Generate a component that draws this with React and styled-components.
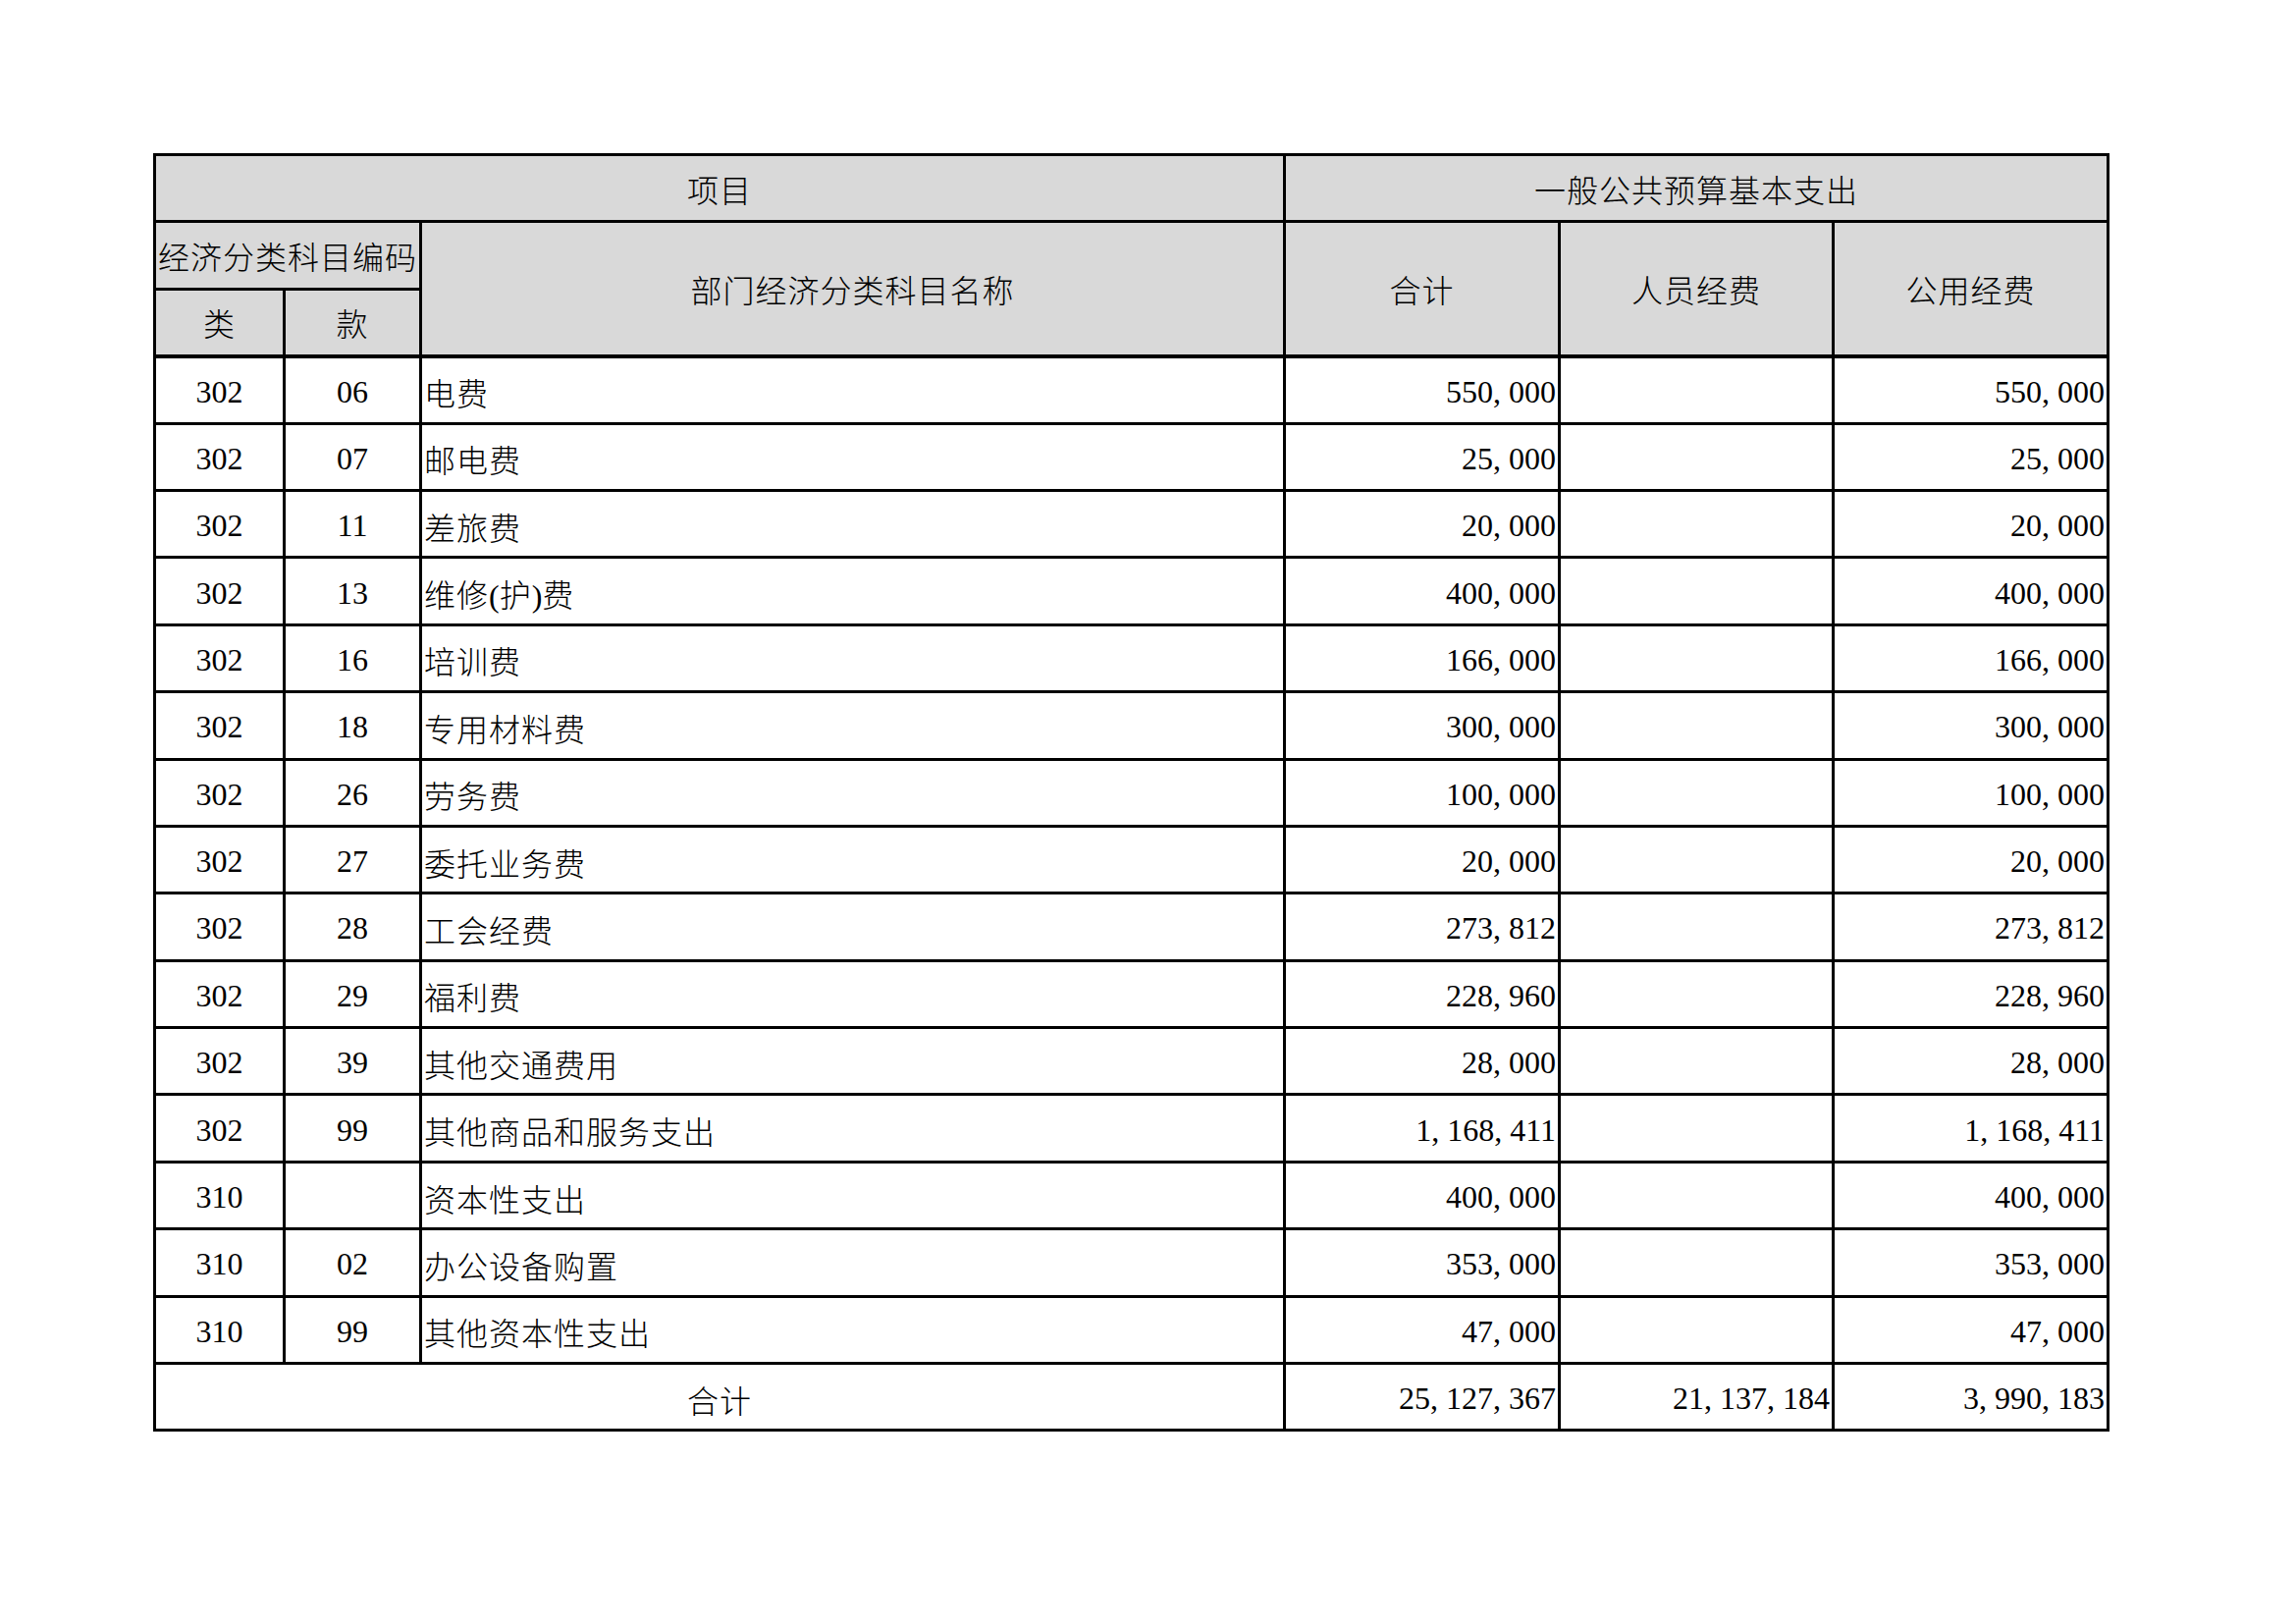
import React from 'react'
import styled, { createGlobalStyle } from 'styled-components'

const GlobalStyle = createGlobalStyle`
  html, body {
    margin: 0;
    padding: 0;
    background: #ffffff;
  }
  body {
    font-family: "Liberation Serif", "Noto Sans CJK SC", serif;
    color: #000;
  }
`

const rows = [
  ['302', '06', '电费', '550,000', '', '550,000'],
  ['302', '07', '邮电费', '25,000', '', '25,000'],
  ['302', '11', '差旅费', '20,000', '', '20,000'],
  ['302', '13', '维修(护)费', '400,000', '', '400,000'],
  ['302', '16', '培训费', '166,000', '', '166,000'],
  ['302', '18', '专用材料费', '300,000', '', '300,000'],
  ['302', '26', '劳务费', '100,000', '', '100,000'],
  ['302', '27', '委托业务费', '20,000', '', '20,000'],
  ['302', '28', '工会经费', '273,812', '', '273,812'],
  ['302', '29', '福利费', '228,960', '', '228,960'],
  ['302', '39', '其他交通费用', '28,000', '', '28,000'],
  ['302', '99', '其他商品和服务支出', '1,168,411', '', '1,168,411'],
  ['310', '', '资本性支出', '400,000', '', '400,000'],
  ['310', '02', '办公设备购置', '353,000', '', '353,000'],
  ['310', '99', '其他资本性支出', '47,000', '', '47,000'],
]

const Page = styled.div`
  padding: 156px 0 180px 156px;
`

const Sheet = styled.table`
  border-collapse: collapse;
  table-layout: fixed;
  width: 1990px;
  border: 3px solid #000;
  font-size: 32px;
`

const Row = styled.tr`
  height: 68.4px;
`

const Head = styled.th`
  background: #d9d9d9;
  border: 3px solid #000;
  border-bottom-width: ${p => (p.$last ? '4px' : '3px')};
  font-weight: 300;
  text-align: center;
  vertical-align: middle;
  padding: 0;
  white-space: nowrap;
  overflow: hidden;
  letter-spacing: 1px;
  font-family: "Noto Sans CJK SC", sans-serif;
`

const Cell = styled.td`
  border: 3px solid #000;
  padding: ${p => (p.$align === 'left' ? '4px 0 0 2px' : p.$align === 'right' ? '4px 2px 0 0' : '4px 0 0 0')};
  text-align: ${p => p.$align || 'center'};
  vertical-align: middle;
  white-space: nowrap;
  overflow: hidden;
`

const Label = styled.span`
  font-family: "Noto Sans CJK SC", sans-serif;
  font-weight: 300;
  letter-spacing: 1px;
`

const Comma = styled.span`
  display: inline-block;
  width: 0.5em;
  text-align: left;
`

const Amount = ({ value }) => {
  if (!value) return null
  const parts = value.split(',')
  return (
    <>
      {parts.map((part, i) => (
        <React.Fragment key={i}>
          {i > 0 && <Comma>,</Comma>}
          {part}
        </React.Fragment>
      ))}
    </>
  )
}

const Name = ({ text }) => {
  // parentheses stay in the latin face, the rest in CJK
  const bits = text.split(/([()])/)
  return (
    <>
      {bits.map((b, i) =>
        b === '(' || b === ')' ? <span key={i}>{b}</span> : <Label key={i}>{b}</Label>
      )}
    </>
  )
}

export default function App() {
  return (
    <Page>
      <GlobalStyle />
      <Sheet>
        <colgroup>
          <col style={{ width: 132 }} />
          <col style={{ width: 139 }} />
          <col style={{ width: 880 }} />
          <col style={{ width: 280 }} />
          <col style={{ width: 279 }} />
          <col style={{ width: 280 }} />
        </colgroup>
        <thead>
          <Row>
            <Head colSpan={3}>项目</Head>
            <Head colSpan={3}>一般公共预算基本支出</Head>
          </Row>
          <Row>
            <Head colSpan={2}>经济分类科目编码</Head>
            <Head rowSpan={2} $last>部门经济分类科目名称</Head>
            <Head rowSpan={2} $last>合计</Head>
            <Head rowSpan={2} $last>人员经费</Head>
            <Head rowSpan={2} $last>公用经费</Head>
          </Row>
          <Row>
            <Head $last>类</Head>
            <Head $last>款</Head>
          </Row>
        </thead>
        <tbody>
          {rows.map((r, i) => (
            <Row key={i}>
              <Cell>{r[0]}</Cell>
              <Cell>{r[1]}</Cell>
              <Cell $align="left">
                <Name text={r[2]} />
              </Cell>
              <Cell $align="right">
                <Amount value={r[3]} />
              </Cell>
              <Cell $align="right">
                <Amount value={r[4]} />
              </Cell>
              <Cell $align="right">
                <Amount value={r[5]} />
              </Cell>
            </Row>
          ))}
          <Row>
            <Cell colSpan={3}>
              <Label>合计</Label>
            </Cell>
            <Cell $align="right">
              <Amount value="25,127,367" />
            </Cell>
            <Cell $align="right">
              <Amount value="21,137,184" />
            </Cell>
            <Cell $align="right">
              <Amount value="3,990,183" />
            </Cell>
          </Row>
        </tbody>
      </Sheet>
    </Page>
  )
}
